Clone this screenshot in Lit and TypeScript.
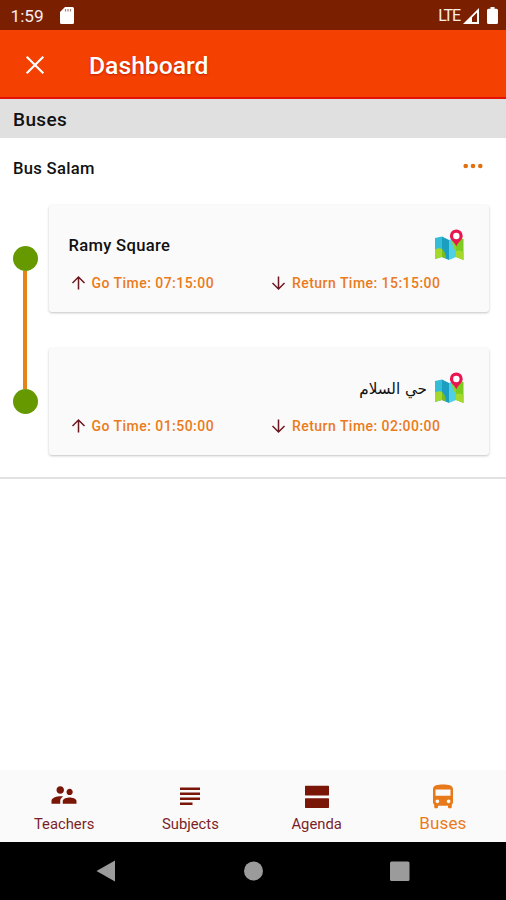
import { LitElement, html, css, svg } from "lit";
import { customElement, property } from "lit/decorators.js";

interface Stop {
  name: string;
  rtl: boolean;
  go: string;
  back: string;
}

const STOPS: Stop[] = [
  { name: "Ramy Square", rtl: false, go: "07:15:00", back: "15:15:00" },
  { name: "حي السلام", rtl: true, go: "01:50:00", back: "02:00:00" },
];

const teachers = svg`<path d="M16.5 12c1.38 0 2.49-1.12 2.49-2.5S17.88 7 16.5 7 14 8.12 14 9.5s1.12 2.5 2.5 2.5zM9 11c1.66 0 2.99-1.34 2.99-3S10.66 5 9 5 6 6.34 6 8s1.34 3 3 3zm7.5 3c-1.83 0-5.5.92-5.5 2.75V19h11v-2.25c0-1.83-3.67-2.75-5.5-2.75zM9 13c-2.33 0-7 1.17-7 3.5V19h7v-2.25c0-.85.33-2.34 2.37-3.47C10.5 13.1 9.66 13 9 13z"/>`;
const subjects = svg`<path d="M14 18H4v2h10v-2zm6-8H4v2h16v-2zM4 16h16v-2H4v2zM4 6v2h16V6H4z"/>`;
const agenda = svg`<path d="M2.9 4.6h18.2q.5 0 .5.5v6.7q0 .5-.5.5H2.9q-.5 0-.5-.5V5.1q0-.5.5-.5zm0 9.9h18.2q.5 0 .5.5v6.8q0 .5-.5.5H2.9q-.5 0-.5-.5V15q0-.5.5-.5z"/>`;
const bus = svg`<path d="M4 17.5c0 .88.39 1.67 1 2.22V21.5c0 .55.45 1 1 1h1c.55 0 1-.45 1-1v-1h8v1c0 .55.45 1 1 1h1c.55 0 1-.45 1-1v-1.78c.61-.55 1-1.34 1-2.22v-10c0-3.5-3.58-4-8-4s-8 .5-8 4v10zm3.5 1c-.83 0-1.5-.67-1.5-1.5s.67-1.5 1.5-1.5 1.5.67 1.5 1.5-.67 1.5-1.5 1.5zm9 0c-.83 0-1.5-.67-1.5-1.5s.67-1.5 1.5-1.5 1.5.67 1.5 1.5-.67 1.5-1.5 1.5zm1.5-6H6v-5h12v5z"/>`;

const TABS = [
  { label: "Teachers", icon: teachers, active: false },
  { label: "Subjects", icon: subjects, active: false },
  { label: "Agenda", icon: agenda, active: false },
  { label: "Buses", icon: bus, active: true },
];

@customElement("stop-card")
export class StopCard extends LitElement {
  @property({ attribute: false }) stop!: Stop;

  static styles = css`
    :host { display: block; }
    .card {
      box-sizing: border-box;
      height: 107px;
      padding: 24px 25px 0 19.5px;
      background: #fafafa;
      border-radius: 3px;
      box-shadow: 0 1px 2.5px rgba(0, 0, 0, 0.24);
    }
    .top { display: flex; align-items: center; height: 32px; gap: 7px; }
    .name { flex: 1; font-size: 16.6px; font-weight: 500; color: #111; letter-spacing: 0.3px; padding-top: 1px; }
    .name.rtl { font-family: "DejaVu Sans", sans-serif; font-size: 15.2px; font-weight: 400; letter-spacing: 0; }
    .map { width: 30px; height: 32px; display: block; }
    .times { display: flex; margin-top: 11px; height: 22px; }
    .time { display: flex; flex: none; align-items: center; gap: 5px; font-size: 14px; font-weight: 500; letter-spacing: 0.46px; color: #ea7a1c; white-space: nowrap; }
    .time.go { width: 200.5px; }
    .arrow { width: 18px; height: 18px; fill: none; stroke: #6b1720; stroke-width: 1.5; }
  `;

  render() {
    const s = this.stop;
    return html`
      <div class="card">
        <div class="top">
          <div class="name ${s.rtl ? "rtl" : ""}" dir=${s.rtl ? "rtl" : "ltr"}>${s.name}</div>
          <svg class="map" viewBox="0 0 30 32">
            <path d="M1 9 8 7.5V28L1 30z" fill="#35bcd6" />
            <path d="M8 7.5 15 11V31L8 28z" fill="#1b9fc0" />
            <path d="M15 11 22 8V28L15 31z" fill="#4fd0e4" />
            <path d="M22 8 29.5 10V31L22 28z" fill="#7ccb1e" />
            <path d="M1 20.5Q5 18.5 8 20V28L1 30z" fill="#a4d82b" />
            <path d="M8 20Q11.5 22.5 12 29.7L8 28z" fill="#7dbb22" />
            <path d="M18 12 22 8V22Q18.5 18.5 18 12z" fill="#8bd334" />
            <path d="M22 22Q25.5 20.5 29.5 23V31L22 28z" fill="#a4d82b" />
            <path d="M22.3 .5a6.4 6.4 0 0 0-6.4 6.400c0 3.800 4.500 5.800 6.400 10.300 1.900-4.500 6.400-6.500 6.400-10.300A6.400 6.400 0 0 0 22.300 .5z" fill="#e91550" />
            <circle cx="22.3" cy="7" r="3.2" fill="#fff" />
          </svg>
        </div>
        <div class="times">
          <div class="time go">
            <svg class="arrow" viewBox="0 0 18 18"><path d="M9.5 15.5V3M3.500 9 9.500 3l6 6" /></svg>
            <span>Go Time: ${s.go}</span>
          </div>
          <div class="time">
            <svg class="arrow" viewBox="0 0 18 18"><path d="M9.500 2.500V15M3.500 9l6 6 6-6" /></svg>
            <span>Return Time: ${s.back}</span>
          </div>
        </div>
      </div>
    `;
  }
}

@customElement("app-root")
export class AppRoot extends LitElement {
  static styles = css`
    :host {
      display: flex;
      flex-direction: column;
      height: 900px;
      overflow: hidden;
      background: #fff;
      font-family: Roboto, sans-serif;
      color: #111;
    }
    .status { display: flex; align-items: center; height: 30px; padding: 0 8px 0 10.5px; background: #7a1f00; color: #f7efed; flex: none; }
    .clock { font-size: 17.2px; width: 49px; margin-top: 2px; }
    .sd { width: 14px; height: 17px; fill: #fff; }
    .lte { margin-left: auto; margin-top: 1px; font-size: 16px; letter-spacing: -1.1px; }
    .signal { width: 16px; height: 16px; margin-left: 3px; margin-top: 1px; }
    .battery { width: 11px; height: 17px; margin-left: 8px; fill: #fff; }
    .bar { display: flex; align-items: center; box-sizing: border-box; height: 69px; padding: 3px 20px 0; background: #f44000; border-bottom: 2px solid #e21208; flex: none; color: #fff; }
    .close { width: 30px; height: 30px; fill: none; stroke: #fff; stroke-width: 2.2; }
    .title { margin-left: 39px; font-size: 24.7px; font-weight: 500; text-shadow: 0 1px 2px rgba(150, 0, 0, 0.5); }
    .section { height: 39px; line-height: 42px; padding-left: 13px; box-sizing: border-box; background: #e0e0e0; font-size: 19px; font-weight: 500; letter-spacing: 0.4px; flex: none; }
    .route { height: 341px; box-sizing: border-box; border-bottom: 2px solid #e2e2e2; flex: none; }
    .head { display: flex; justify-content: space-between; align-items: center; height: 60px; padding: 0 23px 0 13px; font-size: 16.6px; font-weight: 500; letter-spacing: 0.3px; }
    .head span { padding-top: 1px; }
    .more { width: 20px; height: 12px; fill: #e07010; margin-top: -5px; }
    .timeline { display: flex; padding: 7px 17px 0 13px; }
    .track { flex: none; width: 24px; display: flex; flex-direction: column; align-items: center; padding-top: 40.5px; margin-right: 12px; }
    .dot { width: 25px; height: 25px; border-radius: 50%; background: #669900; }
    .line { width: 4px; height: 118px; background: #e6841a; }
    .cards { flex: 1; min-width: 0; display: flex; flex-direction: column; gap: 36px; }
    .grow { flex: 1; }
    .tabs { display: flex; height: 71.5px; padding-left: 1px; background: #fafafa; flex: none; }
    .tab { flex: 1; display: flex; flex-direction: column; align-items: center; padding-top: 10px; color: #7a1f28; font-size: 14.8px; letter-spacing: 0; }
    .tab .icon { fill: #7a1608; }
    .tab.active { color: #ea7a1c; font-size: 17px; letter-spacing: 0.15px; }
    .tab.active .icon { fill: #e8791a; }
    .icon { width: 30px; height: 30px; flex: none; }
    .label { height: 26px; line-height: 29px; }
    .active .label { line-height: 27px; }
    .system { display: flex; align-items: center; justify-content: space-between; height: 58.5px; padding: 0 95px; box-sizing: border-box; background: #000; flex: none; }
    .key { width: 22px; height: 24px; fill: #9b9b9b; }
  `;

  render() {
    return html`
      <div class="status">
        <span class="clock">1:59</span>
        <svg class="sd" viewBox="0 0 14 17"><path d="M5 0h7.5Q14 0 14 1.5v14q0 1.5-1.5 1.5h-11Q0 17 0 15.5V5z" /><path d="M5.5 2v2.5M8 2v2.5M10.5 2v2.5" stroke="#a98074" stroke-width="1.2" /></svg>
        <span class="lte">LTE</span>
        <svg class="signal" viewBox="0 0 16 16"><path fill="#fff" fill-rule="evenodd" d="M0 16 16 0v16zM9 9.500V14h5V4.500z" /></svg>
        <svg class="battery" viewBox="0 0 11 17"><path d="M3.500 0h4v1.800h2Q11 1.800 11 3.300v12.200q0 1.500-1.500 1.500h-8Q0 17 0 15.500V3.300q0-1.500 1.500-1.500h2z" /></svg>
      </div>
      <div class="bar">
        <svg class="close" viewBox="0 0 30 30"><path d="M6.700 6.700 23.300 23.300M23.300 6.700 6.700 23.300" /></svg>
        <div class="title">Dashboard</div>
      </div>
      <div class="section">Buses</div>
      <div class="route">
        <div class="head">
          <span>Bus Salam</span>
          <svg class="more" viewBox="0 0 20 12"><circle cx="2.700" cy="6" r="2.300" /><circle cx="10" cy="6" r="2.300" /><circle cx="17.300" cy="6" r="2.300" /></svg>
        </div>
        <div class="timeline">
          <div class="track"><div class="dot"></div><div class="line"></div><div class="dot"></div></div>
          <div class="cards">${STOPS.map((s) => html`<stop-card .stop=${s}></stop-card>`)}</div>
        </div>
      </div>
      <div class="grow"></div>
      <div class="tabs">
        ${TABS.map(
          (t) => html`<div class="tab ${t.active ? "active" : ""}">
            <svg class="icon" viewBox="0 0 24 24">${t.icon}</svg>
            <span class="label">${t.label}</span>
          </div>`
        )}
      </div>
      <div class="system">
        <svg class="key" viewBox="0 0 22 24"><path d="M1.500 12 20 1.500v21z" /></svg>
        <svg class="key" viewBox="0 0 22 24"><circle cx="11.500" cy="12" r="9.500" /></svg>
        <svg class="key" viewBox="0 0 22 24"><rect x="1" y="2.500" width="19.500" height="19.500" rx="1.500" /></svg>
      </div>
    `;
  }
}
